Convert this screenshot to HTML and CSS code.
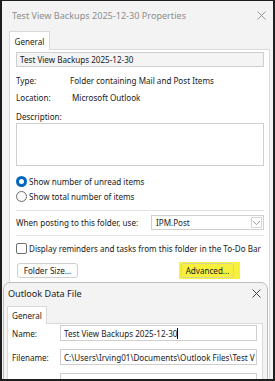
FILE: index.html
```html
<!DOCTYPE html>
<html>
<head>
<meta charset="utf-8">
<link rel="stylesheet" href="styles.css">
</head>
<body>
<div class="frame">
  <div class="dlg">
    <div class="titlebar">
      <span class="title">Test View Backups 2025-12-30 Properties</span>
      <svg class="close" width="9" height="9" viewBox="0 0 9 9"><path d="M0.5 0.5L8.5 8.5M8.5 0.5L0.5 8.5" stroke="#8c8c8c" stroke-width="0.9" fill="none"/></svg>
    </div>
    <div class="tabs"><div class="tab">General</div></div>
    <div class="panel">
      <div class="textbox ro">Test View Backups 2025-12-30</div>
      <div class="row r-type"><span class="lbl">Type:</span><span>Folder containing Mail and Post Items</span></div>
      <div class="row r-loc"><span class="lbl">Location:</span><span>Microsoft Outlook</span></div>
      <div class="row r-desc">Description:</div>
      <div class="textarea"></div>
      <div class="row r-radio1"><span class="radio on"></span><span>Show number of unread items</span></div>
      <div class="row r-radio2"><span class="radio"></span><span>Show total number of items</span></div>
      <div class="sep"></div>
      <div class="row r-post"><span class="post-lbl">When posting to this folder, use:</span>
        <div class="select"><span>IPM.Post</span><span class="chev"><svg width="9" height="6" viewBox="0 0 9 6"><path d="M1 1.2L4.5 4.6L8 1.2" stroke="#8a8a8a" stroke-width="0.9" fill="none"/></svg></span></div>
      </div>
      <div class="sep sep2"></div>
      <div class="row r-check"><span class="check"></span><span>Display reminders and tasks from this folder in the To-Do Bar</span></div>
      <div class="btnrow">
        <div class="btn">Folder Size...</div>
        <div class="hl"><div class="btn btn-adv">Advanced...</div></div>
      </div>
    </div>
  </div>

  <div class="dlg2">
    <div class="titlebar2">
      <span>Outlook Data File</span>
      <svg class="close2" width="9" height="9" viewBox="0 0 9 9"><path d="M0.5 0.5L8.5 8.5M8.5 0.5L0.5 8.5" stroke="#333" stroke-width="0.9" fill="none"/></svg>
    </div>
    <div class="tabs2"><div class="tab tab2">General</div></div>
    <div class="panel2">
      <div class="frow"><span class="flbl">Name:</span><div class="field">Test View Backups 2025-12-30<span class="caret"></span></div></div>
      <div class="frow"><span class="flbl">Filename:</span><div class="field">C:\Users\Irving01\Documents\Outlook Files\Test V</div></div>
      <div class="frow"><span class="flbl"></span><div class="field"></div></div>
    </div>
  </div>
</div>
</body>
</html>
```
FILE: styles.css
```css
* { box-sizing: border-box; }
html, body { margin: 0; padding: 0; }
body {
  width: 275px; height: 381px; overflow: hidden;
  font-family: "Noto Sans", "Segoe UI", sans-serif;
  font-size: 8.1px; color: #1b1b1b; background: #1e1e1e;
}
.frame {
  position: relative; width: 275px; height: 381px;
  border: 2px solid #1e1e1e; border-top-width: 1px;
  background: #f3f3f3; overflow: hidden; white-space: nowrap;
}
.dlg { display: flex; flex-direction: column; height: 100%; }
.titlebar {
  height: 29px; flex: none; display: flex; align-items: center;
  justify-content: space-between; padding: 0 7px 0 10px; color: #8d8d8d; font-size: 9.1px;
}
.tabs { height: 19px; flex: none; display: flex; align-items: flex-end; padding-left: 7px; }
.tab {
  width: 41px; height: 19px; background: #fff; border: 1px solid #dadada; border-bottom: none;
  display: flex; align-items: center; justify-content: center;
  position: relative; z-index: 1; margin-bottom: -1px;
}
.panel {
  flex: 1; margin: 0 3px 0 7px; border: 1px solid #dadada; border-bottom: none;
  background: #fff; padding: 2px 5px 0 6px; display: flex; flex-direction: column;
}
.textbox {
  height: 15px; border: 1px solid #cfcfcf; background: #f4f4f4;
  padding-left: 3px; display: flex; align-items: center; flex: none;
}
.row { display: flex; align-items: center; height: 13px; flex: none; }
.lbl { width: 54px; flex: none; }
.r-type { margin-top: 7px; }
.r-loc { margin-top: 4px; }
.r-loc .lbl { width: 56px; }
.r-desc { margin-top: 6px; }
.textarea { height: 43px; border: 1px solid #cfcfcf; flex: none; }
.r-radio1 { margin-top: 9px; }
.r-radio2 { margin-top: 2px; }
.radio {
  width: 11px; height: 11px; border-radius: 50%; border: 1px solid #6e6e6e;
  margin-right: 2px; flex: none; background: #fafafa;
}
.radio.on { border: 3px solid #0067c0; background: #fff; }
.sep { height: 1px; background: #e3e3e3; margin-top: 7px; flex: none; }
.r-post { margin-top: 4px; height: 15px; justify-content: space-between; }
.select {
  width: 113px; height: 15px; border: 1px solid #cfcfcf; display: flex; align-items: center;
  justify-content: space-between; padding: 0 1px 0 4px;
}
.chev {
  width: 11px; height: 11px; border: 1px solid #d6d6d6; display: flex; align-items: center; justify-content: center;
}
.sep2 { margin-top: 5px; }
.r-check { margin-top: 6px; }
.check {
  width: 11px; height: 11px; border: 1px solid #6e6e6e; border-radius: 2px; margin-right: 2px; flex: none;
}
.btnrow { display: flex; align-items: center; margin-top: 7px; height: 17px; }
.btn {
  height: 15px; border: 1px solid #d0d0d0; border-radius: 3px; background: #fdfdfd;
  display: flex; align-items: center; justify-content: center;
}
.btnrow > .btn { width: 61px; margin-left: 1px; }
.hl {
  margin-left: 101px; background: #f7f03c; height: 17px; width: 61px;
  display: flex; align-items: center; padding: 0 6px 0 2px;
}
.btn-adv { width: 53px; background: transparent; border-color: #d7d59a; }

.dlg2 {
  position: absolute; left: 1px; top: 281px; width: 265px; height: 110px;
  background: #f3f3f3; border: 1px solid #bdbdbd; border-radius: 7px 7px 0 0;
  display: flex; flex-direction: column;
}
.titlebar2 {
  height: 20px; flex: none; display: flex; align-items: center; justify-content: space-between;
  padding: 0 6px 0 4px; color: #1b1b1b; font-size: 9.1px;
}
.tabs2 { height: 20px; flex: none; display: flex; align-items: flex-end; padding-left: 3px; }
.tab2 { width: 40px; height: 18px; }
.panel2 {
  flex: 1; margin: 0 4px 0 3px; background: #fff; border: 1px solid #dadada; border-bottom: none;
  padding: 1px 5px 0 4px; display: flex; flex-direction: column; gap: 8px;
}
.frow { display: flex; align-items: center; height: 16px; flex: none; }
.flbl { width: 48px; flex: none; }
.field {
  flex: 1; height: 16px; border: 1px solid #cfcfcf; display: flex; align-items: center;
  padding-left: 3px; white-space: nowrap; overflow: hidden;
}
.caret { width: 1px; height: 11px; background: #000; flex: none; }
```
